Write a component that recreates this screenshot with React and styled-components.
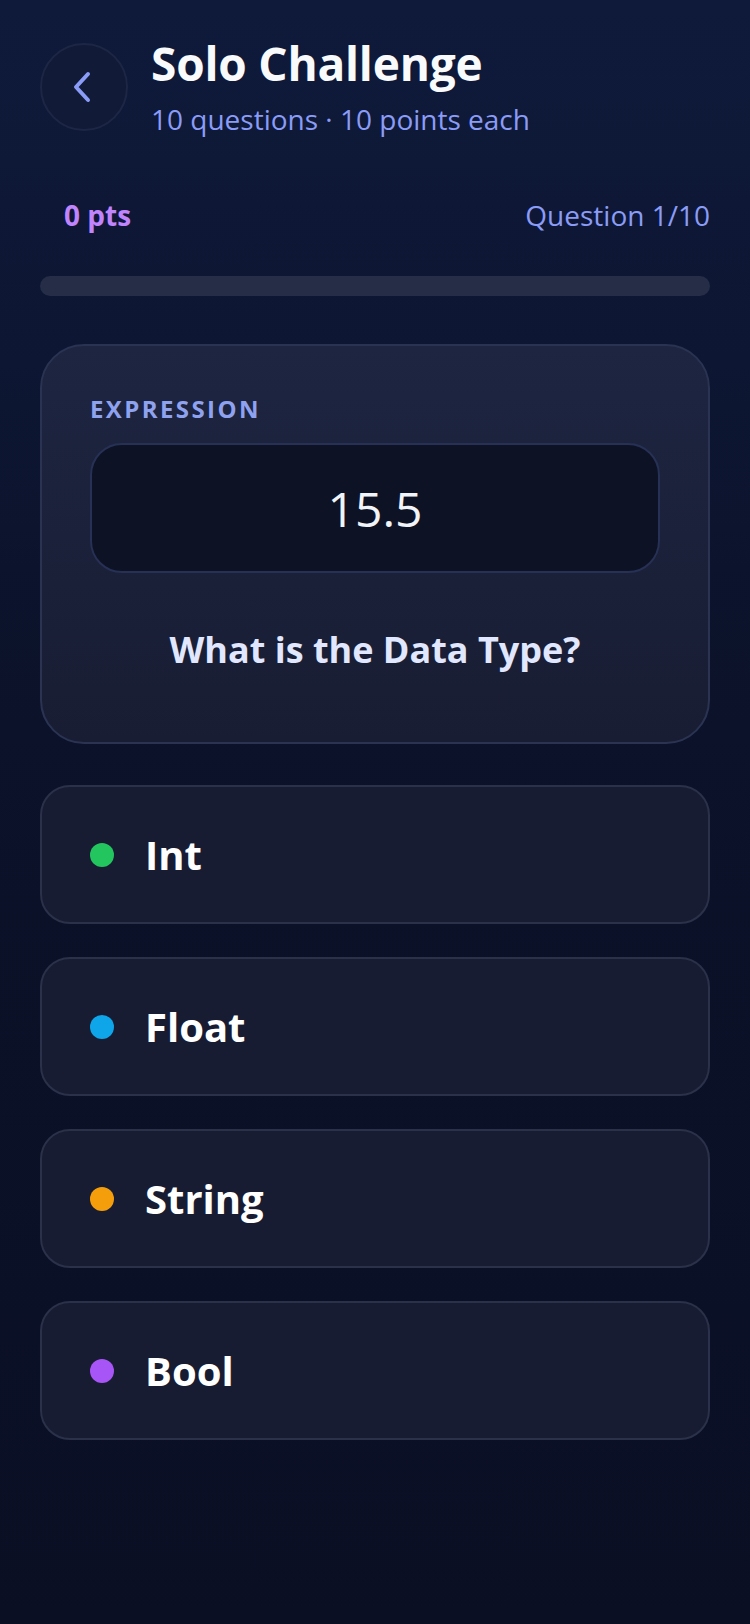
import React from "react";
import styled, { createGlobalStyle } from "styled-components";

const Global = createGlobalStyle`
  html, body { margin: 0; padding: 0; }
  body {
    background: #0a0f24;
    font-family: "Open Sans", "Noto Sans", sans-serif;
  }
  * { box-sizing: border-box; }
`;

const Page = styled.div`
  min-height: 1624px;
  width: 750px;
  padding: 37px 40px 40px;
  background: linear-gradient(180deg, #0f1a3b 0%, #0b1229 45%, #0a0f24 100%);
  display: flex;
  flex-direction: column;
`;

const Header = styled.header`
  display: flex;
  align-items: center;
  gap: 23px;
`;

const BackButton = styled.button`
  width: 88px;
  height: 88px;
  flex: none;
  border-radius: 50%;
  border: 2px solid #1d2645;
  background: #111a37;
  display: flex;
  align-items: center;
  justify-content: center;
  padding: 0 4px 0 0;
  cursor: pointer;
`;

const TitleBlock = styled.div`
  display: flex;
  flex-direction: column;
`;

const Title = styled.h1`
  margin: 0;
  font-size: 46px;
  line-height: 53px;
  font-weight: 700;
  color: #f8fafc;
  letter-spacing: -0.2px;
`;

const Subtitle = styled.p`
  margin: 12px 0 0;
  font-size: 28px;
  line-height: 34px;
  font-weight: 400;
  color: #8b9cf6;
`;

const StatsRow = styled.div`
  margin-top: 62px;
  display: flex;
  justify-content: space-between;
  align-items: center;
  padding-left: 24px;
  font-size: 28px;
  line-height: 34px;
`;

const Points = styled.span`
  font-weight: 700;
  color: #c084fc;
`;

const Counter = styled.span`
  font-weight: 400;
  color: #8b9cf6;
`;

const Track = styled.div`
  margin-top: 44px;
  height: 20px;
  border-radius: 10px;
  background: #252d47;
  overflow: hidden;
`;

const Fill = styled.div`
  height: 100%;
  background: linear-gradient(90deg, #818cf8, #c084fc);
  border-radius: 10px;
`;

const QuestionCard = styled.section`
  margin-top: 48px;
  border: 2px solid #2a3352;
  border-radius: 44px;
  background: linear-gradient(180deg, #1e2541 0%, #1a2038 60%, #181d33 100%);
  padding: 48px 48px 70px;
  display: flex;
  flex-direction: column;
`;

const Label = styled.div`
  font-size: 24px;
  line-height: 30px;
  font-weight: 700;
  letter-spacing: 2.4px;
  color: #8fa2f0;
`;

const ExpressionBox = styled.div`
  margin-top: 19px;
  height: 130px;
  border: 2px solid #263155;
  border-radius: 32px;
  background: #0d1224;
  display: flex;
  align-items: center;
  justify-content: center;
  font-size: 48px;
  font-weight: 400;
  color: #f1f5f9;
`;

const Prompt = styled.h2`
  margin: 55px 0 0;
  text-align: center;
  font-size: 36px;
  line-height: 44px;
  font-weight: 700;
  color: #e0e7ff;
`;

const Options = styled.div`
  margin-top: 41px;
  display: flex;
  flex-direction: column;
  gap: 33px;
`;

const Option = styled.button`
  height: 139px;
  width: 100%;
  border: 2px solid #2a3149;
  border-radius: 30px;
  background: #171c32;
  display: flex;
  align-items: center;
  gap: 31px;
  padding: 0 48px;
  font-family: inherit;
  cursor: pointer;
  text-align: left;
`;

const Dot = styled.span`
  width: 24px;
  height: 24px;
  border-radius: 50%;
  flex: none;
  background: ${(p) => p.$color};
`;

const OptionText = styled.span`
  font-size: 40px;
  font-weight: 700;
  color: #ffffff;
`;

const options = [
  { label: "Int", color: "#22c55e" },
  { label: "Float", color: "#0ea5e9" },
  { label: "String", color: "#f59e0b" },
  { label: "Bool", color: "#a855f7" },
];

export default function App() {
  const progress = 0;
  return (
    <>
      <Global />
      <Page>
        <Header>
          <BackButton aria-label="Back">
            <svg width="22" height="32" viewBox="0 0 22 32" fill="none">
              <path
                d="M17 3 L5 16 L17 29"
                stroke="#8b9cf8"
                strokeWidth="4"
                strokeLinecap="round"
                strokeLinejoin="round"
              />
            </svg>
          </BackButton>
          <TitleBlock>
            <Title>Solo Challenge</Title>
            <Subtitle>10 questions · 10 points each</Subtitle>
          </TitleBlock>
        </Header>

        <StatsRow>
          <Points>0 pts</Points>
          <Counter>Question 1/10</Counter>
        </StatsRow>

        <Track>
          <Fill style={{ width: `${progress}%` }} />
        </Track>

        <QuestionCard>
          <Label>EXPRESSION</Label>
          <ExpressionBox>15.5</ExpressionBox>
          <Prompt>What is the Data Type?</Prompt>
        </QuestionCard>

        <Options>
          {options.map((o) => (
            <Option key={o.label}>
              <Dot $color={o.color} />
              <OptionText>{o.label}</OptionText>
            </Option>
          ))}
        </Options>
      </Page>
    </>
  );
}
